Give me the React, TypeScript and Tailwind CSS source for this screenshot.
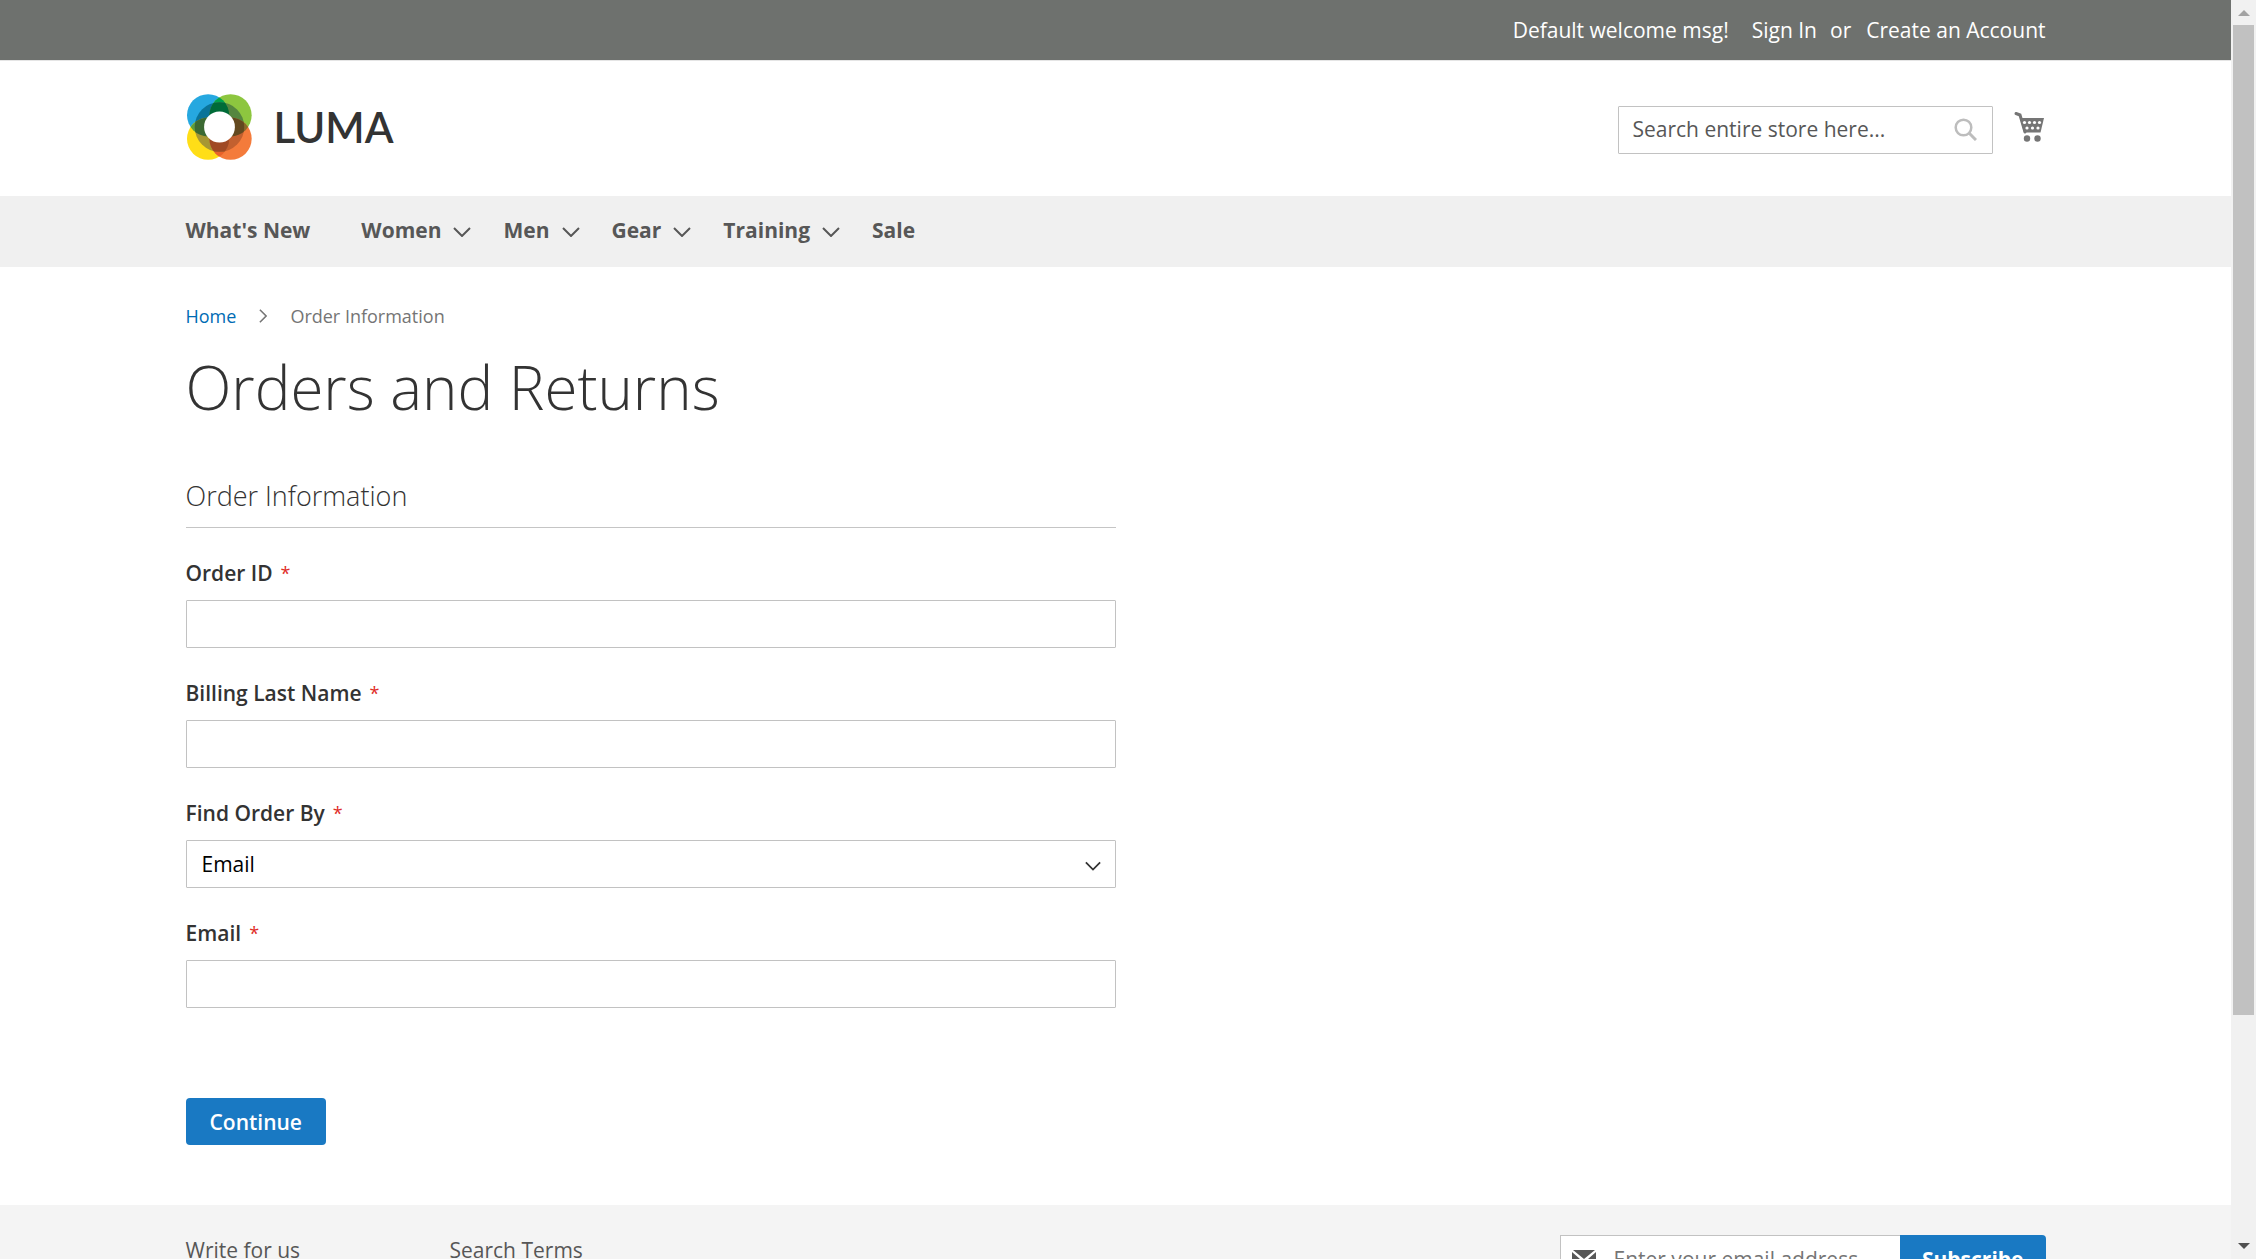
import React from 'react';

const NAV = [
  { label: "What's New", menu: false },
  { label: 'Women', menu: true },
  { label: 'Men', menu: true },
  { label: 'Gear', menu: true },
  { label: 'Training', menu: true },
  { label: 'Sale', menu: false },
];

const container = 'mx-auto w-full max-w-[1920px] px-[30px]';

function Chevron({ className }: { className: string }) {
  return (
    <svg viewBox="0 0 18 10" className={className} fill="none" stroke="currentColor" strokeWidth="2" aria-hidden="true">
      <path d="M1 1l8 8 8-8" />
    </svg>
  );
}

function LogoMark() {
  return (
    <svg viewBox="52 71 194 196" className="h-[66px] w-[65px]" aria-hidden="true">
      <defs>
        <clipPath id="cb"><circle cx="115" cy="134" r="63" /></clipPath>
        <clipPath id="cg"><circle cx="182" cy="134" r="63" /></clipPath>
        <clipPath id="cy"><circle cx="115" cy="204" r="63" /></clipPath>
        <clipPath id="co"><circle cx="182" cy="204" r="63" /></clipPath>
      </defs>
      <circle cx="115" cy="134" r="63" fill="#26a8e0" />
      <circle cx="182" cy="134" r="63" fill="#8dc63f" />
      <circle cx="115" cy="204" r="63" fill="#ffde17" />
      <circle cx="182" cy="204" r="63" fill="#f47b3b" />
      <g clipPath="url(#cb)">
        <circle cx="182" cy="134" r="63" fill="#00a14b" />
        <circle cx="115" cy="204" r="63" fill="#5f9f3a" />
      </g>
      <g clipPath="url(#co)">
        <circle cx="182" cy="134" r="63" fill="#8a6a2a" />
        <circle cx="115" cy="204" r="63" fill="#e8622a" />
      </g>
      <g clipPath="url(#cb)"><circle cx="149" cy="169" r="74" fill="#0a7499" /></g>
      <g clipPath="url(#cg)"><circle cx="149" cy="169" r="74" fill="#55863f" /></g>
      <g clipPath="url(#cy)"><circle cx="149" cy="169" r="74" fill="#a79733" /></g>
      <g clipPath="url(#co)"><circle cx="149" cy="169" r="74" fill="#c2602f" /></g>
      <g clipPath="url(#cb)"><g clipPath="url(#cg)"><circle cx="149" cy="169" r="74" fill="#006b38" /></g></g>
      <g clipPath="url(#cb)"><g clipPath="url(#cy)"><circle cx="149" cy="169" r="74" fill="#3c6a33" /></g></g>
      <g clipPath="url(#co)"><g clipPath="url(#cg)"><circle cx="149" cy="169" r="74" fill="#63491f" /></g></g>
      <g clipPath="url(#co)"><g clipPath="url(#cy)"><circle cx="149" cy="169" r="74" fill="#a04a25" /></g></g>
      <circle cx="149" cy="169" r="46" fill="#fff" />
    </svg>
  );
}

function CartIcon() {
  return (
    <svg viewBox="0 0 30 31" className="h-[31px] w-[30px]" aria-hidden="true">
      <path d="M2 2.5l4 1.5 5 17" fill="none" stroke="#757575" strokeWidth="3" strokeLinecap="round" />
      <path d="M6 7h24l-3.500 14.500H10z" fill="#757575" />
      <g fill="#fff">
        <circle cx="10.500" cy="11.500" r="1.600" /><circle cx="15.500" cy="11.500" r="1.600" /><circle cx="20.500" cy="11.500" r="1.600" /><circle cx="25.500" cy="11.500" r="1.600" />
        <circle cx="13" cy="17" r="1.600" /><circle cx="18.500" cy="17" r="1.600" /><circle cx="24" cy="17" r="1.600" />
      </g>
      <circle cx="13" cy="27.500" r="3.200" fill="#757575" /><circle cx="23.500" cy="27.500" r="3.200" fill="#757575" />
    </svg>
  );
}

function Label({ id, children }: { id: string; children: string }) {
  return (
    <label htmlFor={id} className="mb-3 flex items-center gap-2 font-semibold leading-[30px]">
      {children}
      <span className="text-lg leading-[30px] font-normal text-[#e02b27]">*</span>
    </label>
  );
}

const box = 'block h-12 w-full rounded-[1px] border border-[#c2c2c2] bg-white px-[15px] text-[21px] outline-none';

function TextField({ id, label }: { id: string; label: string }) {
  return (
    <div>
      <Label id={id}>{label}</Label>
      <input id={id} type="text" className={box} />
    </div>
  );
}

export default function App() {
  return (
    <div className="flex h-screen overflow-hidden bg-white font-['Open_Sans',sans-serif] text-[21px] leading-[30px] text-[#333]">
      <div className="flex min-w-0 flex-1 flex-col">
        <header>
          <div className="border-b border-[#e5e5e5] bg-[#6e716e] text-white">
            <div className={`${container} flex h-[60px] items-center justify-end`}>
              <span className="mr-[23px]">Default welcome msg!</span>
              <a href="#signin" className="mr-[13px]">Sign In</a>
              <span className="mr-[15px]">or</span>
              <a href="#create">Create an Account</a>
            </div>
          </div>
          <div className={`${container} flex h-[135px] items-start justify-between`}>
            <a href="#home" aria-label="Luma" className="flex h-[131px] items-center gap-[22px] pl-px">
              <LogoMark />
              <span className="font-['Lato',sans-serif] text-[42px] leading-[48px] font-semibold">LUMA</span>
            </a>
            <div className="flex items-start gap-[21px] pt-[45px] pr-[2px]">
              <form className="flex h-12 w-[375px] items-center rounded-[1px] border border-[#c2c2c2] pr-[15px] pb-[2px] pl-[14px]">
                <input type="search" aria-label="Search" placeholder="Search entire store here..." className="min-w-0 flex-1 text-[21px] outline-none placeholder:text-[#575757]" />
                <button type="button" aria-label="Search">
                  <svg viewBox="0 0 23 23" className="size-[23px]" fill="none" stroke="#bdbdbd" strokeWidth="2.500" aria-hidden="true">
                    <circle cx="9.500" cy="9.500" r="7.800" /><path d="M15 15l7 7" strokeWidth="3" />
                  </svg>
                </button>
              </form>
              <a href="#cart" aria-label="My Cart" className="pt-[5px]"><CartIcon /></a>
            </div>
          </div>
        </header>
        <nav className="bg-[#f0f0f0]">
          <div className={`${container} flex h-[71px] items-center pb-1 font-bold text-[#575757]`}>
            {NAV.map((n) => (
              <a key={n.label} href="#menu" className={n.menu ? 'mr-8 flex items-center gap-3' : 'mr-[51px]'}>
                {n.label}
                {n.menu && <Chevron className="mt-1 h-[10px] w-[18px]" />}
              </a>
            ))}
          </div>
        </nav>
        <div className={`${container} pt-[34px]`}>
          <div className="flex items-center text-lg leading-[30px]">
            <a href="#home" className="text-[#006bb4]">Home</a>
            <Chevron className="mx-[20px] h-[8px] w-[14px] -rotate-90 text-[#757575]" />
            <span className="text-[#757575]">Order Information</span>
          </div>
        </div>
        <main className={`${container} pb-[60px]`}>
          <h1 className="mt-[23px] text-[60px] leading-[66px] font-light">Orders and Returns</h1>
          <form className="mt-[59px] w-1/2">
            <h2 className="mb-[30px] border-b border-[#c5c5c5] pb-[15px] text-[27px] leading-[33px] font-light">Order Information</h2>
            <div className="flex flex-col gap-[30px]">
              <TextField id="order-id" label="Order ID" />
              <TextField id="last-name" label="Billing Last Name" />
              <div>
                <Label id="find-by">Find Order By</Label>
                <div className="relative">
                  <select id="find-by" className={`${box} appearance-none text-black`}>
                    <option>Email</option>
                    <option>ZIP Code</option>
                  </select>
                  <Chevron className="pointer-events-none absolute top-[21px] right-[15px] h-[10px] w-[16px]" />
                </div>
              </div>
              <TextField id="email" label="Email" />
            </div>
            <button type="button" className="mt-[90px] h-[47px] rounded-[4px] bg-[#1979c3] px-6 font-semibold text-white">Continue</button>
          </form>
        </main>
        <footer className="flex-1 bg-[#f4f4f4]">
          <div className={`${container} flex items-start pt-[30px]`}>
            <a href="#write" className="w-[264px] text-[#575757]">Write for us</a>
            <a href="#terms" className="text-[#575757]">Search Terms</a>
            <form className="ml-auto flex w-[486px]">
              <label htmlFor="newsletter" className="flex h-12 flex-1 items-center gap-[18px] border border-r-0 border-[#c2c2c2] bg-white pl-[11px]">
                <svg viewBox="0 0 24 18" className="h-[18px] w-6 shrink-0" aria-label="Newsletter">
                  <path d="M1 0h22L12 9zM0 2l8 7-8 7zM24 2l-8 7 8 7zM9.500 10l2.500 2 2.500-2 8.500 8H1z" fill="#575757" />
                </svg>
                <input id="newsletter" type="email" placeholder="Enter your email address" className="min-w-0 flex-1 text-[21px] outline-none placeholder:text-[#757575]" />
              </label>
              <button type="button" className="h-12 rounded-r-[4px] bg-[#1979c3] px-[22px] font-bold text-white">Subscribe</button>
            </form>
          </div>
        </footer>
      </div>
      <div className="flex w-[25px] shrink-0 flex-col items-center bg-[#f1f1f1] py-[10px]" aria-hidden="true">
        <svg viewBox="0 0 12 6" className="mb-[9px] h-[6px] w-3"><path d="M0 6l6-6 6 6z" fill="#a3a3a3" /></svg>
        <div className="h-[990px] w-[21px] bg-[#c1c1c1]" />
        <svg viewBox="0 0 12 6" className="mt-auto h-[6px] w-3"><path d="M0 0l6 6 6-6z" fill="#505050" /></svg>
      </div>
    </div>
  );
}
